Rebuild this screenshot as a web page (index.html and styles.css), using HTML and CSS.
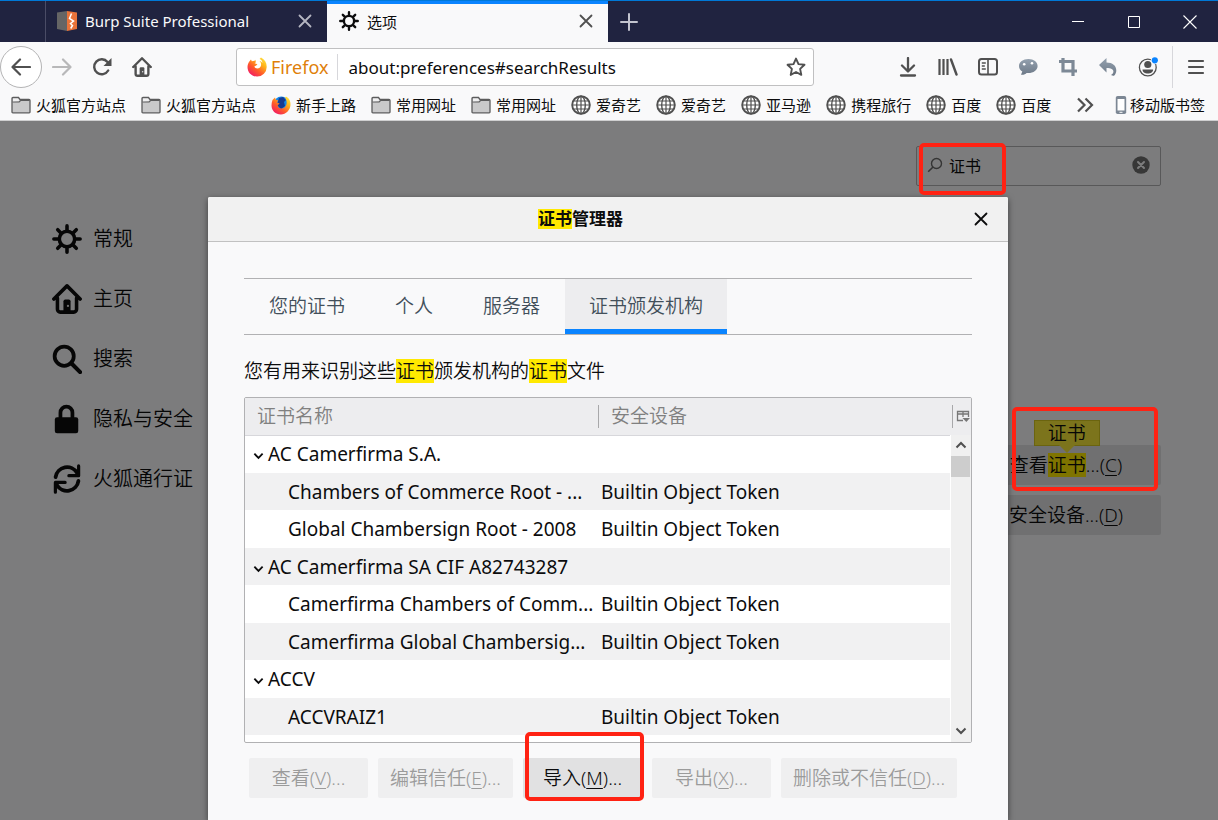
FILE: index.html
```html
<!DOCTYPE html>
<html lang="zh-CN">
<head>
<meta charset="utf-8">
<title>选项</title>
<link rel="stylesheet" href="styles.css">
</head>
<body>
<svg class="defs" aria-hidden="true">
  <defs>
    <linearGradient id="fox-fill" x1="1" y1="0" x2="0.2" y2="1">
      <stop offset="0" stop-color="#fff04a"/><stop offset="0.35" stop-color="#ffb21a"/><stop offset="0.65" stop-color="#ff5b2a"/><stop offset="1" stop-color="#f0156a"/>
    </linearGradient>
    <linearGradient id="ext-fill" x1="0" y1="0" x2="0" y2="1">
      <stop offset="0" stop-color="#93a0ae"/><stop offset="1" stop-color="#6e7a88"/>
    </linearGradient>
  </defs>
  <symbol id="i-gear" viewBox="0 0 16 16"><circle cx="8" cy="8" r="4.1" fill="none" stroke="currentColor" stroke-width="1.9"/><path d="M8 1v2.4M8 12.6V15M1 8h2.4M12.6 8H15M3.05 3.05l1.7 1.7M11.25 11.25l1.7 1.7M12.95 3.05l-1.7 1.7M4.75 11.25l-1.7 1.7" fill="none" stroke="currentColor" stroke-width="1.9" stroke-linecap="round"/></symbol>
  <symbol id="i-home" viewBox="0 0 16 16"><path d="M1 8l7-7 7 7M2.9 7.5v6a1.5 1.5 0 0 0 1.5 1.5h7.2a1.5 1.5 0 0 0 1.5-1.5v-6" fill="none" stroke="currentColor" stroke-width="1.9" stroke-linecap="round" stroke-linejoin="round"/><path d="M6.100 15V9.200a1 1 0 0 1 1-1h1.800a1 1 0 0 1 1 1V15z" fill="currentColor"/><circle cx="8.500" cy="11.700" r=".6" fill="#ddd"/></symbol>
  <symbol id="i-search" viewBox="0 0 16 16"><circle cx="6.5" cy="6.5" r="5.1" fill="none" stroke="currentColor" stroke-width="2"/><path d="M10.3 10.3L15 15" stroke="currentColor" stroke-width="2.2" stroke-linecap="round"/></symbol>
  <symbol id="i-lock" viewBox="0 0 16 16"><path d="M4.5 8V4.6a3.2 3.2 0 0 1 6.4 0V8" fill="none" stroke="currentColor" stroke-width="2"/><rect x="1.5" y="7" width="12.5" height="8.6" rx="1.2" fill="currentColor"/></symbol>
  <symbol id="i-sync" viewBox="0 0 16 16"><path d="M1.9 7A6.2 6.2 0 0 1 13.4 4.8M14.1 9A6.2 6.2 0 0 1 2.6 11.2" fill="none" stroke="currentColor" stroke-width="2" stroke-linecap="round"/><path d="M14.2 1v5.2H9M1.8 15V9.8H7" fill="none" stroke="currentColor" stroke-width="1.7" stroke-linecap="round" stroke-linejoin="round"/></symbol>
  <symbol id="i-x" viewBox="0 0 14 14"><path d="M1.5 1.5l11 11M12.5 1.5l-11 11" stroke="currentColor" stroke-width="1.8" stroke-linecap="round"/></symbol>
  <symbol id="i-folder" viewBox="0 0 20 20"><path d="M1 17V3.5A1 1 0 0 1 2 2.5h5.5l1.5 2H18a1 1 0 0 1 1 1V17a.8.8 0 0 1-.8.8H1.8A.8.8 0 0 1 1 17z" fill="#c9c9ca" stroke="#5c5c5d" stroke-width="1.3"/><path d="M1.5 7h6.7l1.6-1.6h8.7" fill="none" stroke="#5c5c5d" stroke-width="1.1"/><path d="M2 6.2V3.5h5l1.3 1.7-.7.8z" fill="#efeff0"/></symbol>
  <symbol id="i-globe" viewBox="0 0 20 20"><circle cx="10" cy="10" r="8.8" fill="#fff" stroke="#505050" stroke-width="1.9"/><ellipse cx="10" cy="10" rx="4.3" ry="8.8" fill="none" stroke="#505050" stroke-width="1.4"/><path d="M10 1v18M2.5 6h15M1 10h18M2.5 14h15" fill="none" stroke="#505050" stroke-width="1.2"/></symbol>
  <symbol id="i-fox" viewBox="0 0 20 20"><path d="M2.5 4.2L4 2.6l.8 1.6 2.8-.5.7-.9.6 2.5-1.2 1 2.8.9-1.3 1.4-1.9.9c.6 2 3.6 2.7 5.3 1.2 2.1-1.8 1.9-5-.1-6.6 1.6.2 2.5 1.2 3 2C15.300 3.800 14 2.500 12.600 2L14 .5c3.700 2 5.700 5.200 5.700 9.200A9.600 9.600 0 0 1 10 19.500C4.600 19.500.5 15.500.5 10c0-2.300.8-4.200 2-5.800z" fill="url(#fox-fill)"/></symbol>
  <symbol id="i-foxglobe" viewBox="0 0 20 20"><circle cx="10.300" cy="9" r="7.500" fill="#1688e8"/><path d="M8 3l4-1 3 3-2 2 1 4-4 3-4-4z" fill="#173a91"/><path d="M1.500 5L4 2.600l.8 2.200 2.200.5-.8 2.400 2.500.8-2 1.800c.2 2.700 3.300 4 5.800 2.800 3-1.400 4-5 2.500-8.500L14 2l1.500-.2c2.900 1.900 4.300 4.900 4 8.300-.5 5.300-4.500 9.400-9.600 9.400C4.500 19.500.5 15.500.5 10.500c0-2 .3-3.700 1-5.500z" fill="url(#fox-fill)"/></symbol>
  <symbol id="i-chev" viewBox="0 0 12 8"><path d="M1.500 1.500L6 6l4.500-4.500" fill="none" stroke="currentColor" stroke-width="2"/></symbol>
</svg>

<header class="tabbar">
  <div class="tab tab-inactive">
    <svg class="icon20" viewBox="0 0 20 20"><path d="M0 1.500L10 0v20L0 18z" fill="#656565"/><path d="M10 0l10 1.500V18l-10 2z" fill="#e8733a"/><path d="M14.500 2.500l-2 5 4 2.500-3 2.500 2 2-1.800 3" fill="none" stroke="#fff" stroke-width="1.500"/></svg>
    <span class="tab-title">Burp Suite Professional</span>
    <button class="plain tab-close" aria-label="关闭标签页"><svg class="icon14"><use href="#i-x"/></svg></button>
  </div>
  <div class="tab tab-active">
    <svg class="icon20"><use href="#i-gear"/></svg>
    <span class="tab-title">选项</span>
    <button class="plain tab-close" aria-label="关闭标签页"><svg class="icon14"><use href="#i-x"/></svg></button>
  </div>
  <button class="plain newtab" aria-label="新建标签页"><svg class="icon18" viewBox="0 0 18 18"><path d="M9 1v16M1 9h16" stroke="currentColor" stroke-width="2" stroke-linecap="round"/></svg></button>
  <div class="winctl">
    <button class="plain" aria-label="最小化"><svg class="icon14" viewBox="0 0 14 14"><path d="M1 6.500h12" stroke="#fff"/></svg></button>
    <button class="plain" aria-label="最大化"><svg class="icon14" viewBox="0 0 14 14"><path d="M1.500 1.500h11v11h-11z" fill="none" stroke="#fff"/></svg></button>
    <button class="plain" aria-label="关闭"><svg class="icon14" viewBox="0 0 14 14"><path d="M.5.5l13 13M13.500.5l-13 13" stroke="#fff" stroke-width="1.100"/></svg></button>
  </div>
</header>

<nav class="toolbar">
  <button class="plain back" aria-label="后退"><svg class="icon20" viewBox="0 0 20 20"><path d="M19 10H2M9 2.500L1.500 10 9 17.500" fill="none" stroke="currentColor" stroke-width="2.200" stroke-linecap="round" stroke-linejoin="round"/></svg></button>
  <button class="plain tool faded" aria-label="前进"><svg class="icon20" viewBox="0 0 20 20"><path d="M1 10h17M11 2.500l7.500 7.500-7.500 7.500" fill="none" stroke="currentColor" stroke-width="2.200" stroke-linecap="round" stroke-linejoin="round"/></svg></button>
  <button class="plain tool" aria-label="刷新"><svg class="icon20" viewBox="0 0 20 20"><path d="M16.200 13.500A7.500 7.500 0 1 1 15.500 5l1 1.500" fill="none" stroke="currentColor" stroke-width="2.400" stroke-linecap="round"/><path d="M19.500 1v8h-8z" fill="currentColor"/></svg></button>
  <button class="plain tool" aria-label="主页"><svg class="icon20"><use href="#i-home"/></svg></button>
  <div class="urlbar">
    <svg class="icon20"><use href="#i-fox"/></svg>
    <label class="identity" for="url">Firefox</label>
    <input id="url" class="url" type="text" value="about:preferences#searchResults">
    <button class="plain star" aria-label="添加书签"><svg class="icon20" viewBox="0 0 20 20"><path d="M10 1.600l2.500 5.500 6 .7-4.400 4.100 1.200 6L10 15l-5.300 2.900 1.200-6L1.500 7.800l6-.7z" fill="none" stroke="currentColor" stroke-width="1.900" stroke-linejoin="round"/></svg></button>
  </div>
  <button class="plain tool" aria-label="下载"><svg class="icon20" viewBox="0 0 20 20"><path d="M10 1v13M4 8.500l6 6 6-6M3 18.500h14" fill="none" stroke="currentColor" stroke-width="2.300" stroke-linecap="round" stroke-linejoin="round"/></svg></button>
  <button class="plain tool" aria-label="我的足迹"><svg class="icon20" viewBox="0 0 20 20"><path d="M1.500 2v16M5.500 2v16M9.500 2v16" stroke="currentColor" stroke-width="2.200"/><path d="M13 2.500l5.500 15" stroke="currentColor" stroke-width="2.400" stroke-linecap="round"/></svg></button>
  <button class="plain tool" aria-label="侧栏"><svg class="icon20" viewBox="0 0 20 20"><rect x="1" y="2" width="18" height="15.500" rx="2.500" fill="none" stroke="currentColor" stroke-width="2"/><path d="M10 2v15.500" stroke="currentColor" stroke-width="1.600"/><path d="M3.800 6h4M3.800 9h3M3.800 12h4" stroke="currentColor" stroke-width="1.300"/></svg></button>
  <button class="plain tool" aria-label="消息"><svg class="icon20" viewBox="0 0 20 20"><path d="M10.500 2C5 2 1 5 1 9c0 2.400 1.200 4.300 3.300 5.600L3 17.800c3 .2 4.600-.8 5.600-1.800 6.200.6 11-2.500 11-7 0-4-3.900-7-9.100-7z" fill="url(#ext-fill)"/><circle cx="6.200" cy="7.200" r="1.300" fill="#fff"/><circle cx="14" cy="6.200" r="1.300" fill="#fff"/></svg></button>
  <button class="plain tool" aria-label="截图"><svg class="icon20" viewBox="0 0 20 20"><path d="M5 1v13h14M1 4.500h14V19" fill="none" stroke="#7d8996" stroke-width="3.200"/></svg></button>
  <button class="plain tool" aria-label="撤销"><svg class="icon20" viewBox="0 0 20 20"><path d="M8.500 1v4.500c6 0 9.800 3.200 9.800 8 0 2-.8 3.900-2.300 5.300-1-.1-2.300-.4-3-.8 1.600-1 2.400-2.100 2.400-3.500 0-2.300-2.300-3.500-6.900-3.500v4.500L1 8z" fill="url(#ext-fill)"/></svg></button>
  <button class="plain tool" aria-label="账户"><svg class="icon20" viewBox="0 0 20 20"><circle cx="9.800" cy="10.500" r="8.400" fill="none" stroke="currentColor" stroke-width="1.300"/><circle cx="9.800" cy="7.500" r="3.600" fill="currentColor"/><path d="M4.500 12.500h10.600c0 2.700-2.300 4-5.300 4s-5.300-1.300-5.300-4z" fill="currentColor"/><circle cx="16.800" cy="3.300" r="4" fill="#f9f9fa"/><circle cx="16.800" cy="3.300" r="3.100" fill="#0a84ff"/></svg></button>
  <span class="tool-sep"></span>
  <button class="plain menu" aria-label="菜单"><svg class="icon18" viewBox="0 0 18 18"><path d="M2 3h14M2 9h14M2 15h14" stroke="currentColor" stroke-width="2.200" stroke-linecap="round"/></svg></button>
</nav>

<nav class="bookmarks">
  <a href="#"><svg class="icon20"><use href="#i-folder"/></svg>火狐官方站点</a>
  <a href="#"><svg class="icon20"><use href="#i-folder"/></svg>火狐官方站点</a>
  <a href="#"><svg class="icon20"><use href="#i-foxglobe"/></svg>新手上路</a>
  <a href="#"><svg class="icon20"><use href="#i-folder"/></svg>常用网址</a>
  <a href="#"><svg class="icon20"><use href="#i-folder"/></svg>常用网址</a>
  <a href="#"><svg class="icon20"><use href="#i-globe"/></svg>爱奇艺</a>
  <a href="#"><svg class="icon20"><use href="#i-globe"/></svg>爱奇艺</a>
  <a href="#"><svg class="icon20"><use href="#i-globe"/></svg>亚马逊</a>
  <a href="#"><svg class="icon20"><use href="#i-globe"/></svg>携程旅行</a>
  <a href="#"><svg class="icon20"><use href="#i-globe"/></svg>百度</a>
  <a href="#"><svg class="icon20"><use href="#i-globe"/></svg>百度</a>
  <button class="plain more" aria-label="更多书签"><svg class="icon18" viewBox="0 0 18 18"><path d="M2 2.500L8.500 9 2 15.500M9.500 2.500L16 9l-6.500 6.500" fill="none" stroke="#505050" stroke-width="2.200"/></svg></button>
  <a class="mobile" href="#"><svg class="phone" viewBox="0 0 12 20"><rect x=".8" y="1" width="10.400" height="18" rx="1.800" fill="#7c8794"/><path d="M2.500 4h7v11.500h-7z" fill="#fff"/><path d="M4.500 17.300h3" stroke="#fff"/></svg>移动版书签</a>
</nav>

<div class="viewport">
  <div class="prefs">
    <ul class="categories">
      <li><a href="#"><svg class="icon30"><use href="#i-gear"/></svg>常规</a></li>
      <li><a href="#"><svg class="icon30"><use href="#i-home"/></svg>主页</a></li>
      <li><a href="#"><svg class="icon30"><use href="#i-search"/></svg>搜索</a></li>
      <li><a href="#"><svg class="icon30"><use href="#i-lock"/></svg>隐私与安全</a></li>
      <li><a href="#"><svg class="icon30"><use href="#i-sync"/></svg>火狐通行证</a></li>
    </ul>
    <main class="pane">
      <div class="searchbox">
        <svg class="icon16" viewBox="0 0 16 16"><circle cx="9.500" cy="6.500" r="5" fill="none" stroke="#6a6a6a" stroke-width="1.400"/><path d="M6 10l-4.800 4.800" stroke="#6a6a6a" stroke-width="1.600"/></svg>
        <input type="text" aria-label="在选项中查找" value="证书">
        <button class="plain" aria-label="清除"><svg class="icon18" viewBox="0 0 18 18"><circle cx="9" cy="9" r="8.700" fill="#6e6e6e"/><path d="M6 6l6 6M12 6l-6 6" stroke="#f9f9fa" stroke-width="2" stroke-linecap="round"/></svg></button>
      </div>
      <div class="cert-buttons">
        <button class="btn wide">查看<mark>证书<span class="tip">证书</span></mark>...(<u>C</u>)</button>
        <button class="btn wide">安全设备...(<u>D</u>)</button>
      </div>
    </main>
  </div>

  <div class="overlay">
    <section class="dialog" role="dialog" aria-labelledby="dlg-title">
      <div class="dialog-head">
        <h1 id="dlg-title"><mark>证书</mark>管理器</h1>
        <button class="plain dialog-close" aria-label="关闭"><svg class="icon14"><use href="#i-x"/></svg></button>
      </div>
      <div class="dialog-body">
        <div class="tabs" role="tablist">
          <button class="plain" role="tab">您的证书</button>
          <button class="plain" role="tab">个人</button>
          <button class="plain" role="tab">服务器</button>
          <button class="plain selected" role="tab" aria-selected="true">证书颁发机构</button>
        </div>
        <p class="desc">您有用来识别这些<mark>证书</mark>颁发机构的<mark>证书</mark>文件</p>
        <div class="tree">
          <table>
            <thead>
              <tr><th class="c-name"><span>证书名称</span></th><th class="c-dev"><span>安全设备</span></th><th class="c-pick"><svg class="pick" viewBox="0 0 14 14"><path d="M7 11.500H1.500v-9h11V8M1.500 5h11M7 2.500V8" fill="none" stroke="#777" stroke-width="1.300"/><path d="M6.500 9H14l-3.700 4z" fill="#777"/></svg></th></tr>
            </thead>
            <tbody>
              <tr><td class="group"><svg class="twisty"><use href="#i-chev"/></svg>AC Camerfirma S.A.</td><td colspan="2"></td></tr>
              <tr><td class="leaf">Chambers of Commerce Root - ...</td><td colspan="2">Builtin Object Token</td></tr>
              <tr><td class="leaf">Global Chambersign Root - 2008</td><td colspan="2">Builtin Object Token</td></tr>
              <tr><td class="group"><svg class="twisty"><use href="#i-chev"/></svg>AC Camerfirma SA CIF A82743287</td><td colspan="2"></td></tr>
              <tr><td class="leaf">Camerfirma Chambers of Comm...</td><td colspan="2">Builtin Object Token</td></tr>
              <tr><td class="leaf">Camerfirma Global Chambersig...</td><td colspan="2">Builtin Object Token</td></tr>
              <tr><td class="group"><svg class="twisty"><use href="#i-chev"/></svg>ACCV</td><td colspan="2"></td></tr>
              <tr><td class="leaf">ACCVRAIZ1</td><td colspan="2">Builtin Object Token</td></tr>
            </tbody>
          </table>
          <div class="scrollbar">
            <svg class="arrow up"><use href="#i-chev"/></svg>
            <span class="thumb"></span>
            <svg class="arrow down"><use href="#i-chev"/></svg>
          </div>
        </div>
        <div class="actions">
          <button class="btn" disabled>查看(<u>V</u>)...</button>
          <button class="btn" disabled>编辑信任(<u>E</u>)...</button>
          <span class="marked"><button class="btn">导入(<u>M</u>)...</button></span>
          <button class="btn" disabled>导出(<u>X</u>)...</button>
          <button class="btn" disabled>删除或不信任(<u>D</u>)...</button>
        </div>
      </div>
    </section>
  </div>
  <span class="note note-search"></span>
  <span class="note note-view"></span>
</div>
</body>
</html>
```
FILE: styles.css
```css
* { box-sizing: border-box; }
body {
  margin: 0;
  height: 100vh;
  display: flex;
  flex-direction: column;
  overflow: hidden;
  background: #f9f9fa;
  color: #0c0c0d;
  font-family: "Noto Sans", "Noto Sans CJK SC", sans-serif;
  font-size: 15px;
}
button, input { font: inherit; color: inherit; }
svg { display: block; flex: none; }
.defs { position: absolute; width: 0; height: 0; }
.plain { border: 0; padding: 0; background: none; display: flex; align-items: center; justify-content: center; }
a { color: inherit; text-decoration: none; }
mark { background: #ffe900; color: inherit; }
u { text-underline-offset: 3px; text-decoration-thickness: 1px; }

.icon14 { width: 14px; height: 14px; }
.icon16 { width: 16px; height: 16px; }
.icon18 { width: 18px; height: 18px; }
.icon20 { width: 20px; height: 20px; }
.icon30 { width: 30px; height: 30px; }

.tabbar {
  display: flex;
  flex: none;
  height: 42px;
  padding-left: 45px;
  background: #202340;
  border-top: 1px solid #0078d7;
}
.tab { display: flex; align-items: center; gap: 8px; width: 281px; padding: 0 12px; }
.tab-inactive { width: 282px; border-left: 1px solid #4a4c66; color: #f9f9fa; padding: 0 12px 2px 11px; }
.tab-inactive .tab-close { color: #b5b6c2; }
.tab-active { background: #f9f9fa; border-top: 3px solid #0a84ff; padding-bottom: 4px; }
.tab-active .tab-close { color: #505050; }
.tab-active .icon20 { color: #0c0c0d; }
.tab-title { flex: 1; white-space: nowrap; }
.tab-close { width: 20px; height: 20px; }
.newtab { width: 42px; color: #c3c4cf; }
.winctl { display: flex; margin-left: auto; }
.winctl button { width: 56px; }

.toolbar { display: flex; align-items: center; flex: none; height: 50px; color: #505050; }
.back { flex: none; width: 42px; height: 42px; border: 1px solid #b4b4b5; border-radius: 50%; background: #fff; }
.tool { flex: none; width: 40px; height: 40px; }
.faded { color: #b8b8b9; }
.urlbar {
  display: flex;
  align-items: center;
  flex: 1;
  min-width: 0;
  height: 38px;
  margin: 0 74px;
  padding: 0 7px 0 10px;
  background: #fff;
  border: 1px solid #c0c0c1;
  border-radius: 3px;
  font-size: 18px;
}
.identity { color: #e07f0a; padding: 0 9px 0 4px; border-right: 1px solid #d7d7db; line-height: 26px; }
.url { flex: 1; min-width: 0; border: 0; background: none; padding: 0 0 0 10px; color: #0c0c0d; font-size: 17px; }
.tool-sep { flex: none; width: 1px; height: 42px; margin-left: 4px; background: #d7d7db; }
.menu { flex: none; width: 45px; height: 40px; }

.bookmarks {
  display: flex;
  align-items: center;
  gap: 15px;
  flex: none;
  height: 29px;
  padding: 0 13px 3px 11px;
  border-bottom: 1px solid #cfcfd0;
}
.bookmarks a { display: flex; align-items: center; gap: 5px; white-space: nowrap; line-height: 20px; }
.more { margin-left: auto; }
.phone { width: 12px; height: 20px; }
.bookmarks .mobile { gap: 3px; margin-left: 6px; }

.viewport { position: relative; flex: 1; min-height: 0; overflow: hidden; font-size: 19px; }
.prefs { display: flex; height: 100%; }
.categories { list-style: none; margin: 0; padding: 88px 0 0 52px; font-size: 20px; font-weight: 350; }
.categories a { display: flex; align-items: center; gap: 11px; height: 60px; line-height: 28px; }
.pane { flex: 1; display: flex; flex-direction: column; align-items: flex-end; padding: 25px 57px 0 0; }
.searchbox {
  display: flex;
  align-items: center;
  gap: 6px;
  width: 245px;
  height: 40px;
  padding: 0 10px 2px;
  border: 1px solid #b1b1b3;
  border-radius: 2px;
  font-size: 16px;
}
.searchbox input { flex: 1; min-width: 0; border: 0; padding: 0; background: none; }
.cert-buttons { display: flex; flex-direction: column; gap: 10px; margin-top: 259px; }

.btn {
  min-width: 119px;
  height: 40px;
  padding: 0 12px 3px;
  border: 0;
  border-radius: 2px;
  background: #e1e1e2;
  color: #0c0c0d;
  font-weight: 350;
  white-space: nowrap;
}
.btn:disabled { background: #efeff0; color: #9b9b9b; }
.wide { width: 190px; }
.wide mark { position: relative; display: inline-block; line-height: 24px; }
.tip {
  position: absolute;
  bottom: 31px;
  left: 50%;
  width: 66px;
  margin-left: -33px;
  height: 26px;
  border: 1px solid #d6c91e;
  background: #f9e838;
}
.tip::after {
  content: "";
  position: absolute;
  top: 100%;
  left: 50%;
  margin-left: -8px;
  border: 8px solid transparent;
  border-top-color: #f9e838;
  border-bottom: 0;
}

.overlay { position: absolute; inset: 0; display: flex; justify-content: center; padding: 76px 2px 0 0; background: rgba(0, 0, 0, 0.5); }
.dialog { width: 800px; max-width: 100%; background: #f9f9fa; border-radius: 2px 2px 0 0; box-shadow: 0 2px 6px rgba(0, 0, 0, 0.5); }
.dialog-head { display: flex; height: 45px; background: #f1f1f1; border-bottom: 1px solid #c1c1c1; border-radius: 2px 2px 0 0; }
.dialog-head h1 { flex: 1; align-self: center; margin: 0; text-align: center; font-size: 17px; line-height: 20px; font-weight: 700; }
.dialog-head mark { display: inline-block; }
.dialog-close { width: 55px; }
.dialog-body { padding: 36px 36px 0; }
.tabs { display: flex; height: 57px; border: 1px solid #b1b1b3; border-width: 1px 0; color: #424f5a; font-weight: 350; }
.tabs button { padding: 0 25px 3px; }
.tabs .selected { padding: 0 24px 3px; background: #ededef; box-shadow: inset 0 -5px #0a84ff; }
.desc { margin: 24px 0 14px; line-height: 24px; font-weight: 350; }
.desc mark { display: inline-block; }

.tree { position: relative; height: 346px; overflow: hidden; border: 1px solid #b1b1b3; border-radius: 2px; background: #fff; }
table { width: 100%; table-layout: fixed; border-collapse: collapse; }
th { height: 37px; padding: 0; background: #ededef; border-bottom: 1px solid #d7d7db; color: #808080; font-weight: 350; text-align: left; }
th span { display: block; height: 23px; line-height: 23px; padding-left: 12px; border-right: 1px solid #a8a8aa; }
.c-name { width: 354px; }
.c-pick { width: 18px; }
.pick { width: 14px; height: 14px; margin-left: 3px; }
td { height: 38px; padding: 0 0 0 2px; line-height: 24px; white-space: nowrap; }
tbody tr:nth-child(even) td { height: 37px; }
tbody tr:nth-child(even) { background: #f1f1f2; }
td.group { padding-left: 8px; }
td.leaf { padding-left: 43px; }
.twisty { display: inline-block; width: 11px; height: 8px; margin-right: 4px; vertical-align: 1px; }
.scrollbar {
  position: absolute;
  top: 37px;
  right: 0;
  bottom: 0;
  width: 21px;
  display: flex;
  flex-direction: column;
  border-left: 1px solid #fff;
  background: #f0f0f0;
  color: #505050;
}
.arrow { width: 12px; height: 8px; margin: 6px 4px 7px; }
.up { transform: rotate(180deg); }
.down { margin-top: auto; }
.thumb { height: 21px; margin-right: 1px; background: #cdcdcd; }

.actions { display: flex; gap: 10px; padding: 15px 5px; }
.marked { position: relative; }
.marked::after, .note { content: ""; position: absolute; border: 4px solid #ff2213; border-radius: 5px; pointer-events: none; }
.marked::after { inset: -26px -2px -3px 2px; }
.note-search { top: 22px; right: 212px; width: 87px; height: 52px; }
.note-view { top: 286px; right: 60px; width: 146px; height: 84px; }
```
